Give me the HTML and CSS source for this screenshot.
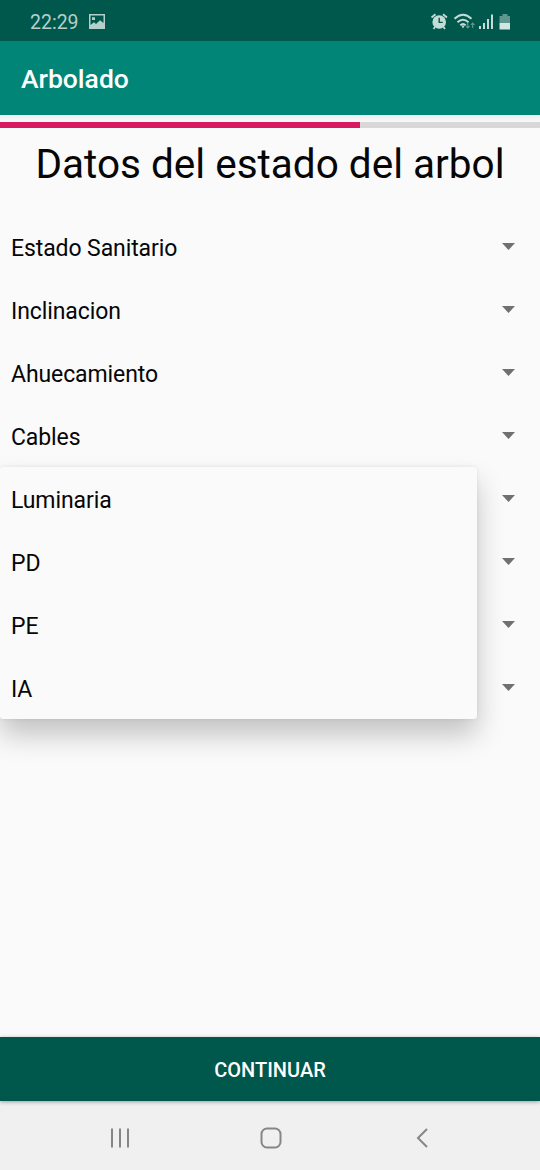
FILE: index.html
```html
<!DOCTYPE html>
<html lang="es">
<head>
<meta charset="utf-8">
<title>Arbolado</title>
<link rel="stylesheet" href="styles.css">
</head>
<body>
<div class="screen">
  <header class="status">
    <span class="clock">22:29</span>
    <svg class="picture" width="16" height="15" viewBox="0 0 16 15"><path fill="#b4d0cb" fill-rule="evenodd" d="M0 0H16V15H0ZM1.5 1.5V11L5 8.3L7 10L11 6.3L14.5 9V1.5ZM3 3.2H6V6H3Z"/></svg>
    <svg class="indicators" width="82" height="18" viewBox="0 0 82 18">
      <g fill="none" stroke="#c4dcd7" stroke-width="2">
        <path d="M1.500 4.5L5.500 1.3M13 1.3L17 4.5M5 14L3.5 16M13.500 14L15 16" stroke-width="1.8"/>
        <path d="M24.5 5.800Q33 -2.200 41.5 5.800M27.5 9.300Q33 4.200 38.5 9.300M30.300 12.300Q33 9.800 35.700 12.300"/>
      </g>
      <circle cx="9.200" cy="9" r="6.8" fill="#c4dcd7"/>
      <path d="M9.200 4.8V9.4H12.700" fill="none" stroke="#00564a" stroke-width="1.4"/>
      <path d="M31.3 12.5H34.7L33 15.500Z" fill="#c4dcd7"/>
      <path d="M37.8 10V15M36 13.2L37.8 15L39.600 13.2M42.7 15V10M40.9 11.8L42.7 10L44.500 11.8" fill="none" stroke="#5f978e" stroke-width="1.2"/>
      <path d="M49 13H51V16H49ZM53 10H55V16H53ZM57 6H59V16H57ZM61 1.5H63V16H61Z" fill="#c4dcd7"/>
      <path d="M72.5 1H77.5V3H80V10H69.500V3H72.500Z" fill="#5f978e"/>
      <path d="M69.500 10H80V16.500H69.500Z" fill="#d2e6e2"/>
    </svg>
  </header>
  <div class="appbar">Arbolado</div>
  <main class="content">
    <div class="progress"><div class="progress-fill"></div></div>
    <h1 class="title">Datos del estado del arbol</h1>
    <div class="fields">
      <div class="field"><span>Estado Sanitario</span><i class="arrow"></i></div>
      <div class="field"><span>Inclinacion</span><i class="arrow"></i></div>
      <div class="field"><span>Ahuecamiento</span><i class="arrow"></i></div>
      <div class="field"><span>Cables</span><i class="arrow"></i></div>
      <div class="field"><i class="arrow"></i></div>
      <div class="field"><i class="arrow"></i></div>
      <div class="field"><i class="arrow"></i></div>
      <div class="field"><i class="arrow"></i></div>
      <div class="popup">
        <div class="option">Luminaria</div>
        <div class="option">PD</div>
        <div class="option">PE</div>
        <div class="option">IA</div>
      </div>
    </div>
  </main>
  <button class="continue">CONTINUAR</button>
  <nav class="navbar">
    <svg width="24" height="24" viewBox="0 0 24 24"><path d="M4 2.500V21.500M12 2.500V21.500M20 2.500V21.500"/></svg>
    <svg width="24" height="24" viewBox="0 0 24 24"><rect x="2.500" y="2.500" width="19" height="19" rx="5.500"/></svg>
    <svg width="24" height="24" viewBox="0 0 24 24"><path d="M17 3L8 12L17 21"/></svg>
  </nav>
</div>
</body>
</html>
```
FILE: styles.css
```css
body {
  margin: 0;
  font-family: Roboto, sans-serif;
  color: #060606;
}

.screen {
  display: flex;
  flex-direction: column;
  width: 540px;
  height: 1170px;
  overflow: hidden;
  background: #fafafa;
}

.status {
  display: flex;
  align-items: center;
  box-sizing: border-box;
  height: 41px;
  padding: 1px 28px 0 30px;
  background: #00574b;
  color: #b4d0cb;
}

.clock {
  font-size: 19.5px;
  line-height: 40px;
  padding-top: 3px;
}

.picture {
  margin-left: 10px;
}

.indicators {
  margin-left: auto;
  padding-top: 1px;
}

.appbar {
  height: 74px;
  padding-left: 21px;
  background: #008577;
  color: #fff;
  font-size: 26.5px;
  font-weight: 500;
  line-height: 76px;
}

.content {
  flex: 1;
  padding-top: 7px;
  background: linear-gradient(#eeeeee, #fafafa 8px);
}

.progress {
  height: 6px;
  background: #d8d8d8;
}

.progress-fill {
  width: 360px;
  height: 6px;
  background: #d81b60;
}

.title {
  margin: 0;
  height: 87px;
  font-size: 40.5px;
  font-weight: 400;
  line-height: 72px;
  text-align: center;
  white-space: nowrap;
}

.fields {
  position: relative;
}

.field {
  display: flex;
  align-items: center;
  box-sizing: border-box;
  height: 63px;
  padding: 0 25px 0 11px;
  font-size: 23px;
  letter-spacing: -0.1px;
}

.field span {
  padding-top: 3px;
}

.arrow {
  width: 13px;
  height: 7px;
  margin-left: auto;
  background: #707070;
  clip-path: polygon(0 0, 100% 0, 50% 100%);
}

.popup {
  position: absolute;
  top: 252px;
  left: 0;
  width: 477px;
  height: 252px;
  border-radius: 3px;
  background: #fafafa;
  box-shadow: 0 16px 28px rgba(0, 0, 0, 0.22), 0 0 4px rgba(0, 0, 0, 0.08);
}

.option {
  height: 63px;
  padding-left: 11px;
  font-size: 23px;
  letter-spacing: -0.1px;
  line-height: 68px;
}

.continue {
  position: relative;
  height: 64px;
  border: 0;
  padding: 2px 0 0;
  background: #00574b;
  box-shadow: 0 1px 4px rgba(0, 0, 0, 0.35);
  color: #fff;
  font-family: Roboto, sans-serif;
  font-size: 20px;
  font-weight: 500;
}

.navbar {
  display: flex;
  align-items: center;
  justify-content: center;
  box-sizing: border-box;
  gap: 127px;
  height: 69px;
  padding-top: 4px;
  padding-left: 1px;
  background: #f0f0f0;
  fill: none;
  stroke: #868686;
  stroke-width: 2;
}
```
